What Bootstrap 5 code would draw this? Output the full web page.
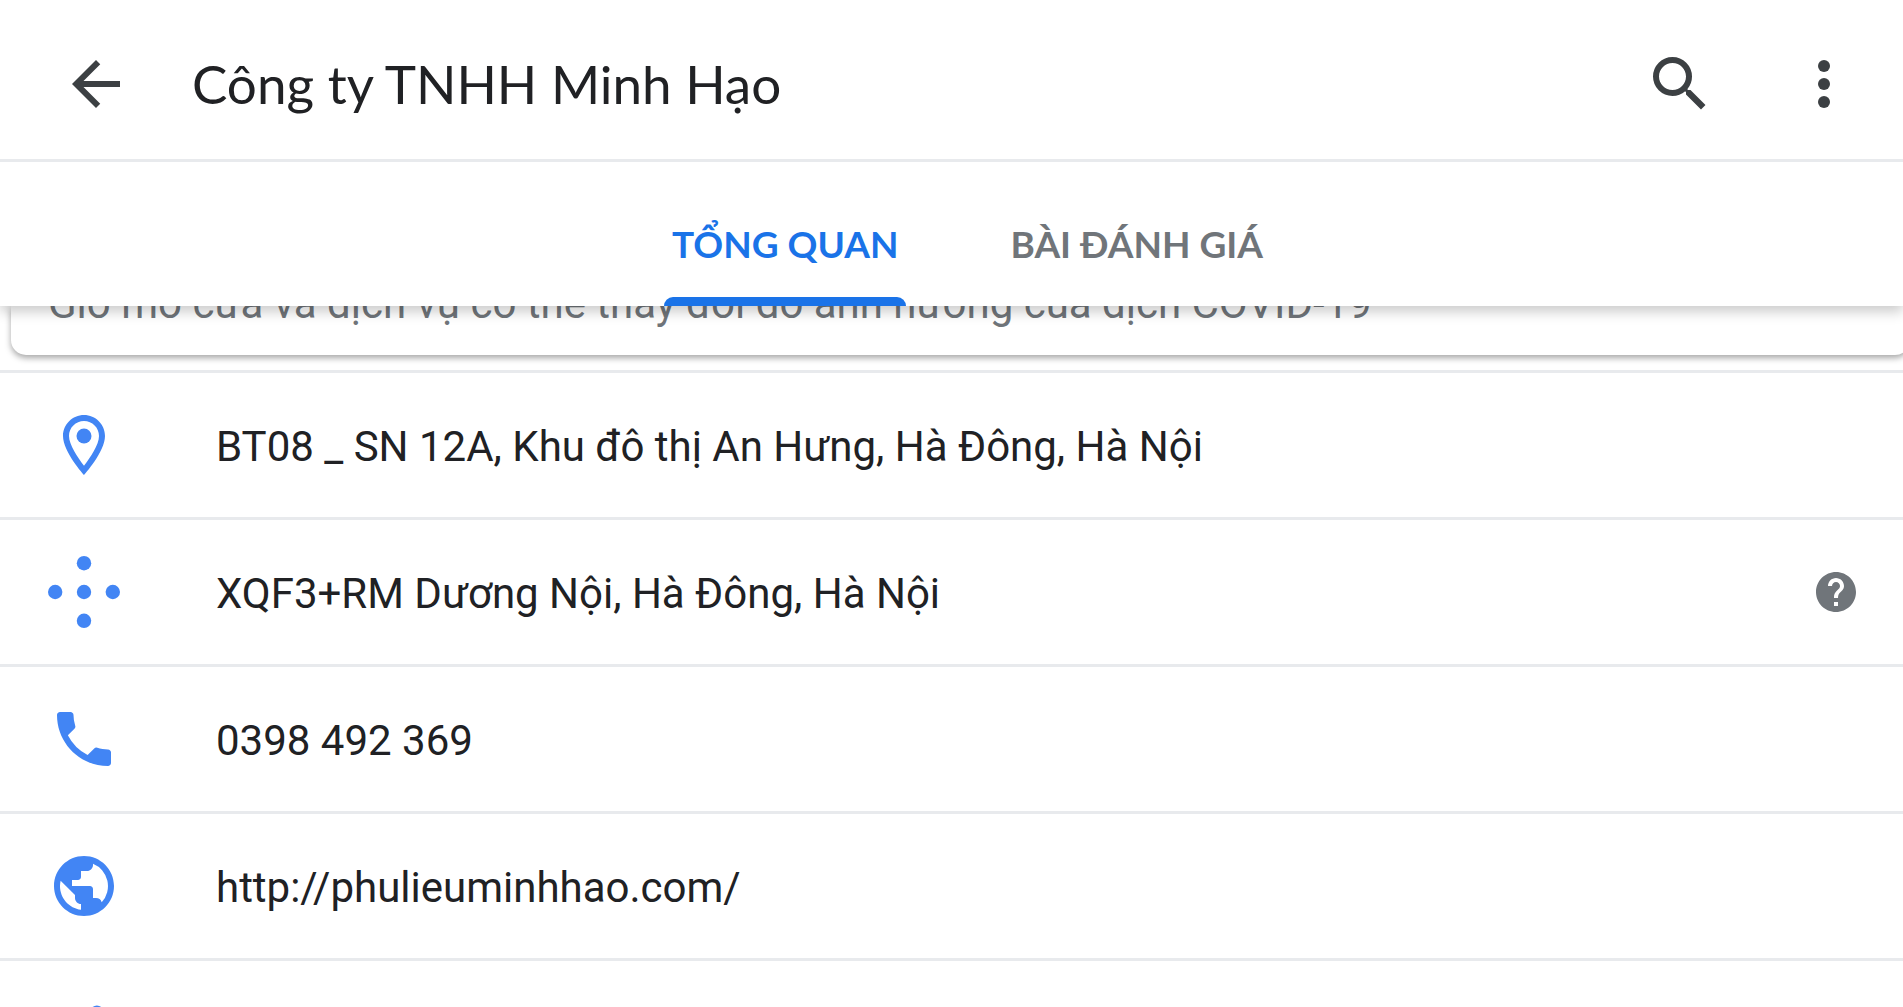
<!DOCTYPE html>
<html lang="vi">
<head>
<meta charset="utf-8">
<meta name="viewport" content="width=device-width, initial-scale=1">
<title>Công ty TNHH Minh Hạo</title>
<link href="https://cdn.jsdelivr.net/npm/bootstrap@5.3.0/dist/css/bootstrap.min.css" rel="stylesheet">
<style>
  body { font-family: Roboto, "Noto Sans", sans-serif; color: #202124; background: #fff; }
  .screen { height: 100vh; }
  .ico { width: 72px; height: 72px; fill: currentColor; flex: none; display: block; }
  .top-area { box-shadow: 0 6px 12px rgba(0, 0, 0, .2); z-index: 2; }
  .app-bar { height: 162px; padding: 9px 43px 0 60px; border-bottom: 3px solid #e8eaed; }
  .app-bar .btn { color: #3c4043; }
  .place-title { font-family: Lato, Roboto, sans-serif; font-size: 53px; line-height: 72px; color: #202124; margin-left: 60px; }
  .actions { gap: 72px; }
  .tab-strip { height: 144px; gap: 96px; padding-left: 32px; }
  .tab-btn { font-family: Lato, Roboto, sans-serif; font-weight: 700; font-size: 37px; line-height: 48px; color: #70757a; padding: 28px 8px 9px; }
  .tab-btn.active { color: #1a73e8; }
  .tab-btn.active::after { content: ""; position: absolute; left: 0; right: 0; bottom: 0; height: 9px; border-radius: 9px 9px 0 0; background: #1a73e8; }
  .notice { height: 49px; margin: 0 -7px 15px 11px; padding-left: 37px; border-radius: 0 0 15px 15px; box-shadow: 0 3px 6px rgba(0, 0, 0, .35); font-size: 42px; line-height: 48px; color: #70757a; }
  .notice p { margin-top: -26px; }
  .info-row { height: 147px; padding: 0 43px 0 48px; gap: 96px; border-top: 3px solid #e8eaed; font-size: 42px; line-height: 54px; color: #202124; }
  .info-text { padding-top: 3px; }
  .lead-ico { color: #4285f4; }
  .help-btn { color: #70757a; }
  .help-btn .ico { width: 48px; height: 48px; }
</style>
</head>
<body>
<div class="screen d-flex flex-column overflow-hidden">
  <header class="top-area position-relative bg-white flex-shrink-0">
    <div class="app-bar d-flex align-items-center">
      <button type="button" class="btn p-0 border-0" aria-label="Quay lại"><svg class="ico" viewBox="0 0 24 24"><path d="M20 11H7.83l5.59-5.59L12 4l-8 8 8 8 1.41-1.41L7.83 13H20z"/></svg></button>
      <h1 class="place-title fw-normal mb-0 flex-grow-1">Công ty TNHH Minh Hạo</h1>
      <div class="actions d-flex">
        <button type="button" class="btn p-0 border-0" aria-label="Tìm kiếm"><svg class="ico" viewBox="0 0 24 24"><path d="M15.5 14h-.79l-.28-.27A6.47 6.47 0 0 0 16 9.5 6.5 6.5 0 1 0 9.5 16c1.61 0 3.09-.59 4.23-1.57l.27.28v.79l5 4.99L20.49 19zm-6 0C7.01 14 5 11.99 5 9.5S7.01 5 9.5 5 14 7.01 14 9.5 11.99 14 9.5 14z"/></svg></button>
        <button type="button" class="btn p-0 border-0" aria-label="Tùy chọn khác"><svg class="ico" viewBox="0 0 24 24"><circle cx="12" cy="6" r="2"/><circle cx="12" cy="12" r="2"/><circle cx="12" cy="18" r="2"/></svg></button>
      </div>
    </div>
    <nav class="tab-strip d-flex justify-content-center" role="tablist">
      <button type="button" role="tab" aria-selected="true" class="tab-btn btn rounded-0 border-0 position-relative active">TỔNG QUAN</button>
      <button type="button" role="tab" aria-selected="false" class="tab-btn btn rounded-0 border-0 position-relative">BÀI ĐÁNH GIÁ</button>
    </nav>
  </header>
  <main>
    <div class="notice d-flex"><p class="mb-0 text-nowrap">Giờ mở cửa và dịch vụ có thể thay đổi do ảnh hưởng của dịch COVID-19</p></div>
    <div class="info-row d-flex align-items-center">
      <svg class="ico lead-ico" viewBox="0 0 24 24"><path d="M12 2C8.13 2 5 5.13 5 9c0 5.25 7 13 7 13s7-7.75 7-13c0-3.87-3.13-7-7-7zM7 9c0-2.76 2.24-5 5-5s5 2.24 5 5c0 2.88-2.88 7.19-5 9.88C9.92 16.21 7 11.85 7 9z"/><circle cx="12" cy="9" r="2.5"/></svg>
      <span class="info-text flex-grow-1">BT08 _ SN 12A, Khu đô thị An Hưng, Hà Đông, Hà Nội</span>
    </div>
    <div class="info-row d-flex align-items-center">
      <svg class="ico lead-ico" viewBox="0 0 24 24"><circle cx="12" cy="12" r="2.4"/><circle cx="12" cy="2.4" r="2.4"/><circle cx="12" cy="21.6" r="2.4"/><circle cx="2.4" cy="12" r="2.4"/><circle cx="21.6" cy="12" r="2.4"/></svg>
      <span class="info-text flex-grow-1">XQF3+RM Dương Nội, Hà Đông, Hà Nội</span>
      <button type="button" class="help-btn btn p-0 border-0" aria-label="Trợ giúp"><svg class="ico" viewBox="0 0 24 24"><path d="M12 2C6.48 2 2 6.48 2 12s4.48 10 10 10 10-4.48 10-10S17.52 2 12 2zm1 17h-2v-2h2zm2.07-7.75-.9.92C13.45 12.9 13 13.5 13 15h-2v-.5c0-1.1.45-2.1 1.17-2.83l1.24-1.26c.37-.36.59-.86.59-1.41 0-1.1-.9-2-2-2s-2 .9-2 2H8c0-2.21 1.79-4 4-4s4 1.79 4 4c0 .88-.36 1.68-.93 2.25z"/></svg></button>
    </div>
    <div class="info-row d-flex align-items-center">
      <svg class="ico lead-ico" viewBox="0 0 24 24"><path d="M20 15.5c-1.25 0-2.45-.2-3.57-.57a1.02 1.02 0 0 0-1.02.24l-2.2 2.2a15.05 15.05 0 0 1-6.59-6.59l2.2-2.21a.96.96 0 0 0 .25-1A11.36 11.36 0 0 1 8.5 4c0-.55-.45-1-1-1H4c-.55 0-1 .45-1 1 0 9.39 7.61 17 17 17 .55 0 1-.45 1-1v-3.5c0-.55-.45-1-1-1z"/></svg>
      <span class="info-text flex-grow-1">0398 492 369</span>
    </div>
    <div class="info-row d-flex align-items-center">
      <svg class="ico lead-ico" viewBox="0 0 24 24"><path d="M12 2C6.48 2 2 6.48 2 12s4.48 10 10 10 10-4.48 10-10S17.52 2 12 2zm-1 17.93C7.05 19.44 4 16.08 4 12c0-.62.08-1.21.21-1.79L9 15v1c0 1.1.9 2 2 2zm6.9-2.54A2 2 0 0 0 16 16h-1v-3c0-.55-.45-1-1-1H8v-2h2c.55 0 1-.45 1-1V7h2c1.1 0 2-.9 2-2v-.41A7.99 7.99 0 0 1 17.9 17.39z"/></svg>
      <a href="http://phulieuminhhao.com/" class="info-text flex-grow-1 text-reset text-decoration-none">http://phulieuminhhao.com/</a>
    </div>
    <div class="info-row d-flex align-items-center">
      <svg class="ico lead-ico" viewBox="0 0 24 24"><circle cx="16.3" cy="5" r="2.2"/></svg>
    </div>
  </main>
</div>
<script src="https://cdn.jsdelivr.net/npm/bootstrap@5.3.0/dist/js/bootstrap.bundle.min.js"></script>
</body>
</html>
